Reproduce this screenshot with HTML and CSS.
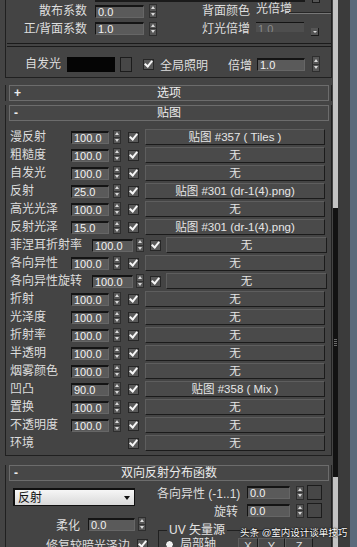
FILE: index.html
```html
<!DOCTYPE html>
<html lang="zh-CN">
<head>
    <meta charset="UTF-8">
    <meta name="viewport" content="width=device-width, initial-scale=1.0">
    <title>VRayMtl - 贴图</title>
    <link rel="stylesheet" href="styles.css">
</head>
<body>
<div class="app">
    <div class="panel">

        <!-- 基本参数 rollout, scrolled so only its bottom shows -->
        <div class="group basic">
            <div class="cut-edge">
                <span class="cut-line"></span>
                <span class="cut-box"></span>
            </div>
            <div class="prow row-a">
                <span class="plabel">散布系数</span>
                <span class="num pnum">0.0</span>
                <span class="spin"><i></i><i></i></span>
                <span class="plabel2">背面颜色</span>
                <span class="ghost">光倍增</span>
                <span class="etch"></span>
            </div>
            <div class="prow row-b">
                <span class="plabel">正/背面系数</span>
                <span class="num pnum">1.0</span>
                <span class="spin"><i></i><i></i></span>
                <span class="plabel2">灯光倍增</span>
                <span class="num off">1.0</span>
                <span class="dropbtn"></span>
            </div>
            <div class="dbl"></div>
            <div class="prow row-c">
                <span class="self-label">自发光</span>
                <span class="swatch"></span>
                <span class="mapsq"></span>
                <span class="check"></span>
                <span class="gi-label">全局照明</span>
                <span class="mul-label">倍增</span>
                <span class="num cnum">1.0</span>
                <span class="spin tall"><i></i><i></i></span>
            </div>
        </div>

        <!-- 选项 (closed) -->
        <div class="rollout closed">
            <div class="rhead"><span class="sign">+</span><span class="rtitle">选项</span><span class="sign"></span></div>
        </div>

        <!-- 贴图 -->
        <div class="rollout maps">
            <div class="rhead"><span class="sign">-</span><span class="rtitle">贴图</span><span class="sign"></span></div>
            <div class="map-list">
                <div class="map-row"><span class="mlabel">漫反射</span><span class="num mnum">100.0</span><span class="spin"><i></i><i></i></span><span class="check"></span><span class="mapbtn">贴图 #357 ( Tiles )</span></div>
                <div class="map-row"><span class="mlabel">粗糙度</span><span class="num mnum">100.0</span><span class="spin"><i></i><i></i></span><span class="check"></span><span class="mapbtn">无</span></div>
                <div class="map-row"><span class="mlabel">自发光</span><span class="num mnum">100.0</span><span class="spin"><i></i><i></i></span><span class="check"></span><span class="mapbtn">无</span></div>
                <div class="map-row"><span class="mlabel">反射</span><span class="num mnum">25.0</span><span class="spin"><i></i><i></i></span><span class="check"></span><span class="mapbtn">贴图 #301 (dr-1(4).png)</span></div>
                <div class="map-row"><span class="mlabel">高光光泽</span><span class="num mnum">100.0</span><span class="spin"><i></i><i></i></span><span class="check"></span><span class="mapbtn">无</span></div>
                <div class="map-row"><span class="mlabel">反射光泽</span><span class="num mnum">15.0</span><span class="spin"><i></i><i></i></span><span class="check"></span><span class="mapbtn">贴图 #301 (dr-1(4).png)</span></div>
                <div class="map-row wide"><span class="mlabel">菲涅耳折射率</span><span class="num mnum">100.0</span><span class="spin"><i></i><i></i></span><span class="check"></span><span class="mapbtn">无</span></div>
                <div class="map-row"><span class="mlabel">各向异性</span><span class="num mnum">100.0</span><span class="spin"><i></i><i></i></span><span class="check"></span><span class="mapbtn">无</span></div>
                <div class="map-row wide"><span class="mlabel">各向异性旋转</span><span class="num mnum">100.0</span><span class="spin"><i></i><i></i></span><span class="check"></span><span class="mapbtn">无</span></div>
                <div class="map-row"><span class="mlabel">折射</span><span class="num mnum">100.0</span><span class="spin"><i></i><i></i></span><span class="check"></span><span class="mapbtn">无</span></div>
                <div class="map-row"><span class="mlabel">光泽度</span><span class="num mnum">100.0</span><span class="spin"><i></i><i></i></span><span class="check"></span><span class="mapbtn">无</span></div>
                <div class="map-row"><span class="mlabel">折射率</span><span class="num mnum">100.0</span><span class="spin"><i></i><i></i></span><span class="check"></span><span class="mapbtn">无</span></div>
                <div class="map-row"><span class="mlabel">半透明</span><span class="num mnum">100.0</span><span class="spin"><i></i><i></i></span><span class="check"></span><span class="mapbtn">无</span></div>
                <div class="map-row"><span class="mlabel">烟雾颜色</span><span class="num mnum">100.0</span><span class="spin"><i></i><i></i></span><span class="check"></span><span class="mapbtn">无</span></div>
                <div class="map-row"><span class="mlabel">凹凸</span><span class="num mnum">90.0</span><span class="spin"><i></i><i></i></span><span class="check"></span><span class="mapbtn">贴图 #358 ( Mix )</span></div>
                <div class="map-row"><span class="mlabel">置换</span><span class="num mnum">100.0</span><span class="spin"><i></i><i></i></span><span class="check"></span><span class="mapbtn">无</span></div>
                <div class="map-row"><span class="mlabel">不透明度</span><span class="num mnum">100.0</span><span class="spin"><i></i><i></i></span><span class="check"></span><span class="mapbtn">无</span></div>
                <div class="map-row env"><span class="mlabel">环境</span><span class="check"></span><span class="mapbtn">无</span></div>
            </div>
        </div>

        <!-- 双向反射分布函数 -->
        <div class="rollout brdf">
            <div class="rhead"><span class="sign">-</span><span class="rtitle">双向反射分布函数</span><span class="sign"></span></div>
            <div class="brdf-body">
                <div class="bcol left">
                    <div class="select"><span>反射</span><span class="caret"></span></div>
                    <div class="brow soft">
                        <span class="blabel">柔化</span>
                        <span class="num snum">0.0</span>
                        <span class="spin"><i></i><i></i></span>
                    </div>
                    <div class="brow fix">
                        <span class="blabel">修复较暗光泽边</span>
                        <span class="check"></span>
                    </div>
                </div>
                <div class="bcol right">
                    <div class="brow aniso">
                        <span class="blabel">各向异性 (-1..1)</span>
                        <span class="num anum">0.0</span>
                        <span class="spin"><i></i><i></i></span>
                        <span class="mapsq small"></span>
                    </div>
                    <div class="brow rot">
                        <span class="blabel">旋转</span>
                        <span class="num anum">0.0</span>
                        <span class="spin"><i></i><i></i></span>
                        <span class="mapsq small"></span>
                    </div>
                    <fieldset class="uv">
                        <legend>UV 矢量源</legend>
                        <div class="uv-row">
                            <span class="radio"></span>
                            <span class="uv-label">局部轴</span>
                            <span class="axis x">X</span><span class="axis y">Y</span><span class="axis z">Z</span>
                        </div>
                    </fieldset>
                </div>
            </div>
        </div>

    </div>
    <div class="scrollbar">
        <div class="track-top"></div>
        <div class="thumb"><span class="grip"></span></div>
        <div class="track-bottom"></div>
    </div>
    <div class="gutter"></div>
    <div class="edge"></div>

    <div class="watermark">头条 @室内设计谈单技巧</div>
</div>
</body>
</html>
```

FILE: styles.css
```css
body {
    margin: 0;
    padding: 0;
    background-color: #444;
    color: #dedede;
    font-family: "Liberation Sans", "Noto Sans CJK SC", sans-serif;
    font-size: 12px;
}

.app {
    position: relative;
    display: flex;
    width: 357px;
    height: 547px;
    overflow: hidden;
}

.panel {
    width: 332px;
    flex: none;
}

/* ---------- shared controls ---------- */

.num {
    display: block;
    box-sizing: border-box;
    height: 13px;
    padding-left: 2px;
    border-top: 2px solid #141414;
    border-left: 1px solid #141414;
    border-right: 1px solid #666;
    border-bottom: 1px solid #666;
    background-color: #5a5a5a;
    color: #f2f2f2;
    font-size: 11px;
    line-height: 10px;
    overflow: hidden;
    white-space: nowrap;
}

.spin {
    display: flex;
    flex-direction: column;
    flex: none;
    box-sizing: border-box;
    width: 8px;
    height: 14px;
    background-color: #565656;
    border: 1px solid #2e2e2e;
}

.spin i {
    flex: 1;
    display: flex;
    align-items: center;
    justify-content: center;
}

.spin i + i {
    border-top: 1px solid #333;
}

.spin i:first-child::after {
    content: "";
    border-left: 2px solid transparent;
    border-right: 2px solid transparent;
    border-bottom: 3px solid #dadada;
}

.spin i:last-child::after {
    content: "";
    border-left: 2px solid transparent;
    border-right: 2px solid transparent;
    border-top: 3px solid #dadada;
}

.spin.tall {
    height: 16px;
}

.check {
    display: flex;
    align-items: center;
    justify-content: center;
    flex: none;
    box-sizing: border-box;
    width: 11px;
    height: 11px;
    border: 1px solid #262626;
    background-color: #5a5a5a;
}

.check::after {
    content: "";
    width: 3px;
    height: 6px;
    margin-top: -2px;
    border: solid #f6f6f6;
    border-width: 0 2px 2px 0;
    transform: rotate(40deg);
}

.mapsq {
    display: block;
    box-sizing: border-box;
    width: 12px;
    height: 15px;
    border: 1px solid #1c1c1c;
    background-color: #474747;
}

.mapsq.small {
    width: 15px;
    height: 15px;
}

/* ---------- rollout frames ---------- */

.group {
    box-sizing: border-box;
    width: 327px;
    margin-left: 5px;
    border-left: 1px solid #202020;
    border-right: 1px solid #202020;
}

.basic {
    height: 78px;
    border-bottom: 1px solid #202020;
}

.rollout {
    box-sizing: border-box;
    width: 327px;
    margin-left: 5px;
    border-left: 1px solid #202020;
    border-right: 1px solid #202020;
}

.rollout.closed {
    margin-top: 7px;
}

.rollout.maps {
    margin-top: 4px;
    border-bottom: 1px solid #202020;
}

.rollout.brdf {
    margin-top: 9px;
}

.rhead {
    display: flex;
    align-items: center;
    box-sizing: border-box;
    height: 16px;
    margin: 0 2px 0 3px;
    padding: 0 4px;
    border: 1px solid #6c6c6c;
    background-color: #474747;
    color: #ececec;
    line-height: 14px;
}

.sign {
    width: 16px;
    font-weight: bold;
}

.rtitle {
    flex: 1;
    text-align: center;
}

/* ---------- 基本参数 bottom ---------- */

.cut-edge {
    display: flex;
    height: 4px;
}

.cut-line {
    width: 210px;
    height: 2px;
    margin-left: 89px;
    background-color: #1a1a1a;
}

.cut-box {
    box-sizing: border-box;
    width: 8px;
    height: 3px;
    margin-left: 7px;
    border: 1px solid #1a1a1a;
    border-top: none;
    background-color: #555;
}

.prow {
    display: flex;
    align-items: center;
    white-space: nowrap;
}

.row-a {
    height: 14px;
}

.row-b {
    height: 15px;
    margin-top: 3px;
}

.plabel {
    width: 81px;
    text-align: right;
    line-height: 14px;
}

.pnum {
    width: 49px;
    margin-left: 8px;
}

.prow .spin {
    margin-left: 5px;
}

.plabel2 {
    width: 54px;
    margin-left: 45px;
    line-height: 14px;
}

.ghost {
    width: 33px;
    align-self: flex-start;
    line-height: 11px;
}

.etch {
    flex: 1;
    align-self: flex-start;
    height: 0;
    margin-top: 8px;
    border-top: 1px solid #262626;
    border-bottom: 1px solid #777;
}

.num.off {
    align-self: flex-start;
    width: 48px;
    height: 10px;
    margin-top: 1px;
    border-width: 1px 0 0 0;
    background-color: #4e4e4e;
    color: #8a8a8a;
    line-height: 13px;
}

.dropbtn {
    display: flex;
    align-items: center;
    justify-content: center;
    align-self: flex-end;
    box-sizing: border-box;
    width: 8px;
    height: 8px;
    margin-left: 7px;
    border-right: 1px solid #1a1a1a;
    border-bottom: 1px solid #1a1a1a;
    background-color: #555;
}

.dropbtn::after {
    content: "";
    border-left: 2px solid transparent;
    border-right: 2px solid transparent;
    border-top: 2px solid #ddd;
}

.dbl {
    height: 2px;
    margin: 7px 0 0 1px;
    border-top: 1px solid #1b1b1b;
    border-bottom: 1px solid #1b1b1b;
}

.row-c {
    height: 16px;
    margin-top: 9px;
}

.self-label {
    width: 42px;
    margin-left: 19px;
    line-height: 16px;
}

.swatch {
    width: 48px;
    height: 15px;
    background-color: #050505;
}

.row-c .mapsq {
    margin-left: 5px;
}

.row-c .check {
    margin-left: 11px;
}

.gi-label {
    width: 68px;
    margin-left: 6px;
}

.mul-label {
    width: 29px;
}

.cnum {
    width: 48px;
}

.row-c .spin {
    margin-left: 7px;
}

/* ---------- 贴图 list ---------- */

.map-list {
    padding: 8px 0 4px;
}

.map-row {
    display: flex;
    align-items: center;
    height: 16px;
    padding-left: 4px;
    white-space: nowrap;
}

.map-row + .map-row {
    margin-top: 2px;
}

.mlabel {
    width: 61px;
    line-height: 16px;
}

.mnum {
    width: 38px;
    margin-right: 4px;
}

.map-row .spin {
    margin-right: 7px;
}

.map-row .check {
    margin-right: 6px;
}

.mapbtn {
    display: flex;
    align-items: center;
    justify-content: center;
    box-sizing: border-box;
    width: 180px;
    height: 16px;
    border: 1px solid;
    border-color: #5e5e5e #1b1b1b #1b1b1b #5e5e5e;
    background-color: #4a4a4a;
    color: #e6e6e6;
    font-size: 11.5px;
    line-height: 14px;
}

.wide .mlabel {
    width: 82px;
}

.wide .mnum {
    width: 41px;
    margin-right: 3px;
}

.wide .spin {
    margin-right: 6px;
}

.wide .check {
    margin-right: 5px;
}

.wide .mapbtn {
    width: 161px;
}

.env .check {
    margin-left: 57px;
}

/* ---------- 双向反射分布函数 ---------- */

.brdf-body {
    display: flex;
}

.bcol.left {
    width: 144px;
}

.bcol.right {
    flex: 1;
}

.select {
    display: flex;
    align-items: center;
    justify-content: space-between;
    box-sizing: border-box;
    width: 122px;
    height: 18px;
    margin: 7px 0 0 7px;
    padding: 0 4px 0 3px;
    border: 1px solid #101010;
    border-top-width: 2px;
    border-left-width: 2px;
    background: linear-gradient(#f6f6f6, #d9d9d9);
    color: #111;
    line-height: 14px;
}

.caret {
    border-left: 3px solid transparent;
    border-right: 3px solid transparent;
    border-top: 4px solid #111;
}

.brow {
    display: flex;
    align-items: center;
    white-space: nowrap;
}

.soft {
    height: 14px;
    margin-top: 11px;
}

.soft .blabel {
    width: 74px;
    text-align: right;
}

.snum {
    width: 47px;
    margin-left: 8px;
}

.fix {
    height: 14px;
    margin-top: 6px;
}

.fix .blabel {
    width: 124px;
    text-align: right;
}

.fix .check {
    margin-left: 7px;
}

.aniso {
    height: 15px;
    margin-top: 4px;
}

.aniso .blabel {
    width: 90px;
    margin-left: 7px;
}

.rot {
    height: 15px;
    margin-top: 3px;
}

.rot .blabel {
    width: 88px;
    margin-right: 9px;
    text-align: right;
}

.anum {
    width: 43px;
}

.brow .spin {
    margin-left: 6px;
}

.brow .mapsq {
    margin-left: 3px;
}

.soft .spin {
    margin-left: 3px;
}

.uv {
    box-sizing: border-box;
    width: 172px;
    height: 40px;
    margin: 5px 0 0 8px;
    padding: 0 0 0 6px;
    border: 1px solid #202020;
    border-right: none;
    border-bottom: none;
}

.uv legend {
    padding: 0 2px;
    margin-left: 2px;
    line-height: 14px;
    color: #e4e4e4;
}

.uv-row {
    display: flex;
    align-items: flex-start;
    white-space: nowrap;
}

.radio {
    box-sizing: border-box;
    width: 9px;
    height: 9px;
    margin-top: 3px;
    border: 1px solid #222;
    border-radius: 50%;
    background-color: #f0f0f0;
}

.uv-label {
    margin-left: 6px;
    line-height: 14px;
    width: 58px;
}

.axis {
    box-sizing: border-box;
    height: 16px;
    margin-top: 1px;
    border: 1px solid;
    border-color: #5e5e5e #1b1b1b #1b1b1b #5e5e5e;
    background-color: #4a4a4a;
    text-align: center;
    font-size: 11px;
    line-height: 14px;
}

.axis.x { width: 20px; }
.axis.y { width: 27px; }
.axis.z { width: 28px; }

/* ---------- scrollbar / edge ---------- */

.scrollbar {
    display: flex;
    flex-direction: column;
    width: 5px;
    margin-left: 1px;
    background-color: #c4c4c4;
}

.track-top {
    height: 208px;
}

.thumb {
    display: flex;
    align-items: center;
    justify-content: center;
    height: 269px;
    background-color: #121212;
}

.grip {
    width: 3px;
    height: 8px;
    background: repeating-linear-gradient(#6a6a6a 0 1px, #121212 1px 2px);
}

.gutter {
    width: 12px;
    background-color: #3b3b3b;
}

.edge {
    flex: 1;
    background-color: #5a6a7b;
}

.watermark {
    position: absolute;
    left: 240px;
    top: 527px;
    color: #fff;
    font-size: 9.5px;
    line-height: 12px;
    white-space: nowrap;
    text-shadow: 0 0 2px #000, 0 0 1px #000;
}
```
